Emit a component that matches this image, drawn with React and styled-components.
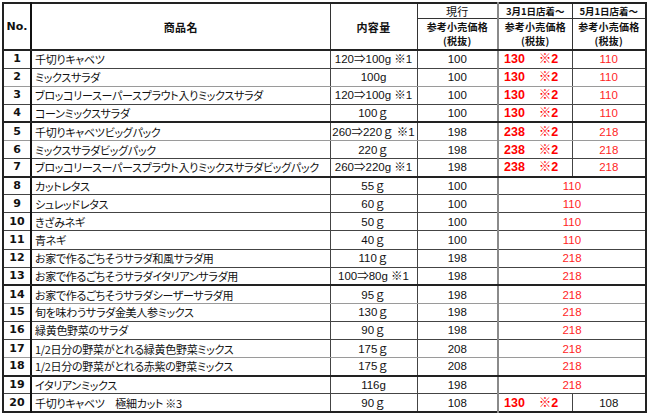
import React from 'react';
import styled, { createGlobalStyle } from 'styled-components';

const GlobalStyle = createGlobalStyle`
    body {
        margin: 0;
        background: #ffffff;
    }
`;

const Sheet = styled.div`
    padding: 2px 0 0 2px;
`;

const Table = styled.table`
    border-collapse: collapse;
    table-layout: fixed;
    width: 645px;
    border: 2px solid #222;
    font-family: "Liberation Sans", "Noto Sans CJK JP", sans-serif;
    font-size: 11.5px;
    color: #111;
`;

const HeadCell = styled.th`
    border: 1px solid #333;
    border-bottom: ${p => (p.$top ? '1px solid #333' : '2px solid #222')};
    border-right: ${p => p.$rightHeavy ? '2px solid #111' : p.$rightGrey ? '2px solid #8a8a8a' : '1px solid #333'};
    height: ${p => (p.$top ? '14px' : '30px')};
    padding: 0;
    font-family: "Noto Sans CJK JP", sans-serif;
    font-size: ${p => (p.$top && p.$small ? '9.5px' : p.$small ? '10px' : '11px')};
    font-weight: ${p => (p.$light ? 400 : 700)};
    line-height: 14px;
    letter-spacing: ${p => (p.$top && p.$small ? '0' : p.$small ? '0.2px' : '0.3px')};
    text-align: center;
    vertical-align: middle;
    white-space: nowrap;
    overflow: hidden;
`;

const NoHead = styled(HeadCell)`
    font-family: "DejaVu Sans", sans-serif;
    font-size: 11px;
    letter-spacing: 0;
`;

const Row = styled.tr`
    height: 18.1px;
`;

const Cell = styled.td`
    border: 1px solid #444;
    border-bottom: ${p => p.$heavy ? '2px solid #222' : p.$grey ? '1px solid #9a9a9a' : '1px solid #444'};
    border-right: ${p => p.$rightHeavy ? '2px solid #111' : p.$rightGrey ? '2px solid #8a8a8a' : '1px solid #444'};
    padding: 0 ${p => (p.$left ? '3px' : '0')};
    text-align: ${p => (p.$left ? 'left' : 'center')};
    vertical-align: middle;
    white-space: nowrap;
    overflow: hidden;
    line-height: 16px;
    color: ${p => (p.$red ? '#ff1f1f' : '#111')};
`;

const NoCell = styled(Cell)`
    font-family: "DejaVu Sans", sans-serif;
    font-weight: 700;
    font-size: 11px;
`;

const NameCell = styled(Cell)`
    font-family: "Noto Sans CJK JP", sans-serif;
    font-size: 11px;
    letter-spacing: -0.3px;
    font-feature-settings: "palt";
`;

const Special = styled.div`
    display: flex;
    align-items: center;
    gap: 14px;
    padding-left: 5px;
    color: #ff0000;
    font-weight: 700;
    font-size: 12.5px;
`;

const rows = [
    { no: 1, name: '千切りキャベツ', size: '120⇒100g ※1', now: 100, mar: '130', may: 110 },
    { no: 2, name: 'ミックスサラダ', size: '100g', now: 100, mar: '130', may: 110, grey: true },
    { no: 3, name: 'ブロッコリースーパースプラウト入りミックスサラダ', size: '120⇒100g ※1', now: 100, mar: '130', may: 110 },
    { no: 4, name: 'コーンミックスサラダ', size: '100ｇ', now: 100, mar: '130', may: 110, heavy: true },
    { no: 5, name: '千切りキャベツビッグパック', size: '260⇒220ｇ ※1', now: 198, mar: '238', may: 218, grey: true },
    { no: 6, name: 'ミックスサラダビッグパック', size: '220ｇ', now: 198, mar: '238', may: 218 },
    { no: 7, name: 'ブロッコリースーパースプラウト入りミックスサラダビッグパック', size: '260⇒220g ※1', now: 198, mar: '238', may: 218, heavy: true },
    { no: 8, name: 'カットレタス', size: '55ｇ', now: 100, both: 110 },
    { no: 9, name: 'シュレッドレタス', size: '60ｇ', now: 100, both: 110 },
    { no: 10, name: 'きざみネギ', size: '50ｇ', now: 100, both: 110 },
    { no: 11, name: '青ネギ', size: '40ｇ', now: 100, both: 110 },
    { no: 12, name: 'お家で作るごちそうサラダ和風サラダ用', size: '110ｇ', now: 198, both: 218 },
    { no: 13, name: 'お家で作るごちそうサラダイタリアンサラダ用', size: '100⇒80g ※1', now: 198, both: 218, heavy: true },
    { no: 14, name: 'お家で作るごちそうサラダシーザーサラダ用', size: '95ｇ', now: 198, both: 218, grey: true },
    { no: 15, name: '旬を味わうサラダ金美人参ミックス', size: '130ｇ', now: 198, both: 218 },
    { no: 16, name: '緑黄色野菜のサラダ', size: '90ｇ', now: 198, both: 218 },
    { no: 17, name: '1/2日分の野菜がとれる緑黄色野菜ミックス', size: '175ｇ', now: 208, both: 218, grey: true },
    { no: 18, name: '1/2日分の野菜がとれる赤紫の野菜ミックス', size: '175ｇ', now: 208, both: 218, heavy: true },
    { no: 19, name: 'イタリアンミックス', size: '116g', now: 198, both: 218 },
    { no: 20, name: '千切りキャベツ　極細カット ※3', size: '90ｇ', now: 108, mar: '130', may: 108, plain: true },
];

function PriceRow({ item }) {
    const line = { $heavy: item.heavy, $grey: item.grey };
    return (
        <Row>
            <NoCell {...line} $rightHeavy>{item.no}</NoCell>
            <NameCell {...line} $left>{item.name}</NameCell>
            <Cell {...line}>{item.size}</Cell>
            <Cell {...line} $rightGrey>{item.now}</Cell>
            {item.both ? (
                <Cell {...line} colSpan={2} $red>{item.both}</Cell>
            ) : (
                <>
                    <Cell {...line}>
                        <Special>
                            <span>{item.mar}</span>
                            <span>※2</span>
                        </Special>
                    </Cell>
                    <Cell {...line} $red={!item.plain}>{item.may}</Cell>
                </>
            )}
        </Row>
    );
}

function App() {
    return (
        <Sheet>
            <GlobalStyle />
            <Table>
                <colgroup>
                    <col style={{ width: '28px' }} />
                    <col style={{ width: '299px' }} />
                    <col style={{ width: '87px' }} />
                    <col style={{ width: '81px' }} />
                    <col style={{ width: '74px' }} />
                    <col style={{ width: '74px' }} />
                </colgroup>
                <thead>
                    <tr>
                        <NoHead rowSpan={2} $rightHeavy>No.</NoHead>
                        <HeadCell rowSpan={2}>商品名</HeadCell>
                        <HeadCell rowSpan={2}>内容量</HeadCell>
                        <HeadCell $top $light $rightGrey>現行</HeadCell>
                        <HeadCell $top $small>3月1日店着～</HeadCell>
                        <HeadCell $top $small>5月1日店着～</HeadCell>
                    </tr>
                    <tr>
                        <HeadCell $small $rightGrey>参考小売価格<br />(税抜)</HeadCell>
                        <HeadCell $small>参考小売価格<br />(税抜)</HeadCell>
                        <HeadCell $small>参考小売価格<br />(税抜)</HeadCell>
                    </tr>
                </thead>
                <tbody>
                    {rows.map(item => (
                        <PriceRow key={item.no} item={item} />
                    ))}
                </tbody>
            </Table>
        </Sheet>
    );
}

export default App;
